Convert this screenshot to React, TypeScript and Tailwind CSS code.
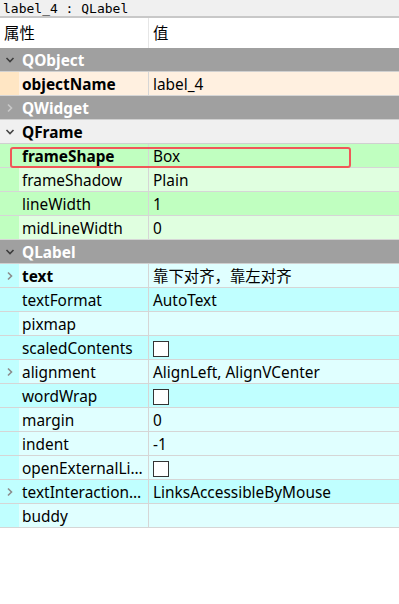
const font = { fontFamily: '"Noto Sans", "Noto Sans CJK SC", sans-serif' };

type Prop = {
  name: string;
  value?: string;
  bold?: boolean;
  arrow?: boolean;
  check?: boolean;
  dark: boolean;
  ring?: boolean;
};

type Group = {
  title: string;
  open: boolean;
  current?: boolean;
  strip: string;
  darkBg: string;
  lightBg: string;
  props: Prop[];
};

const groups: Group[] = [
  {
    title: "QObject",
    open: true,
    strip: "bg-[#ffe6c4]",
    darkBg: "bg-[#ffe6c4]",
    lightBg: "bg-[#fff0e0]",
    props: [{ name: "objectName", value: "label_4", bold: true, dark: false }],
  },
  { title: "QWidget", open: false, strip: "", darkBg: "", lightBg: "", props: [] },
  {
    title: "QFrame",
    open: true,
    current: true,
    strip: "bg-[#c0ffc0]",
    darkBg: "bg-[#c0ffc0]",
    lightBg: "bg-[#e0ffe0]",
    props: [
      { name: "frameShape", value: "Box", bold: true, dark: true, ring: true },
      { name: "frameShadow", value: "Plain", dark: false },
      { name: "lineWidth", value: "1", dark: true },
      { name: "midLineWidth", value: "0", dark: false },
    ],
  },
  {
    title: "QLabel",
    open: true,
    strip: "bg-[#c0ffff]",
    darkBg: "bg-[#c0ffff]",
    lightBg: "bg-[#e0ffff]",
    props: [
      { name: "text", value: "靠下对齐，靠左对齐", bold: true, arrow: true, dark: false },
      { name: "textFormat", value: "AutoText", dark: true },
      { name: "pixmap", value: "", dark: false },
      { name: "scaledContents", check: true, dark: true },
      { name: "alignment", value: "AlignLeft, AlignVCenter", arrow: true, dark: false },
      { name: "wordWrap", check: true, dark: true },
      { name: "margin", value: "0", dark: false },
      { name: "indent", value: "-1", dark: false },
      { name: "openExternalLi…", check: true, dark: false },
      { name: "textInteraction…", value: "LinksAccessibleByMouse", arrow: true, dark: true },
      { name: "buddy", value: "", dark: false },
    ],
  },
];

const Chevron = ({ open, className }: { open: boolean; className: string }) => (
  <svg width="10" height="10" viewBox="0 0 10 10" className={className}>
    {open ? (
      <path d="M1.5 3 L5 6.5 L8.5 3" fill="none" stroke="currentColor" strokeWidth="1.6" />
    ) : (
      <path d="M3 1.5 L6.5 5 L3 8.5" fill="none" stroke="currentColor" strokeWidth="1.6" />
    )}
  </svg>
);

const PropRow = ({ p, g }: { p: Prop; g: Group }) => (
  <div className={`relative flex h-6 border-b border-[#d6d6d6] ${p.dark ? g.darkBg : g.lightBg}`}>
    <div className={`flex w-[19px] items-center justify-center ${g.strip}`}>
      {p.arrow && <Chevron open={false} className="text-[#8c8c8c]" />}
    </div>
    <div
      className={`flex w-[129px] items-center whitespace-nowrap overflow-hidden pl-[3px] pt-[2px] text-black ${
        p.bold ? "font-bold" : ""
      }`}
    >
      {p.name}
    </div>
    <div className="w-px bg-[#d6d6d6]" />
    <div className="flex flex-1 items-center whitespace-nowrap pl-[4px] pt-[2px] text-black">
      {p.check ? (
        <span className="h-[16px] w-[16px] border border-[#333] bg-white" />
      ) : (
        p.value
      )}
    </div>
    {p.ring && (
      <div className="absolute left-[10px] top-[3px] h-[21px] w-[341px] rounded-[3px] border-2 border-[#f05858]" />
    )}
  </div>
);

export default function App() {
  return (
    <div className="h-[604px] w-[399px] bg-white text-[15.4px] leading-none" style={font}>
      <div
        className="flex h-[18px] items-center border-b-2 border-[#c8c8c8] bg-[#f0f0f0] pl-[3px] text-[13px] text-black"
        style={{ fontFamily: '"DejaVu Sans Mono", monospace' }}
      >
        label_4 : QLabel
      </div>
      <div className="flex h-[30px] bg-white">
        <div className="flex w-[148px] items-center pl-[4px] pt-[2px] text-black">属性</div>
        <div className="w-px bg-[#e6e6e6]" />
        <div className="flex flex-1 items-center pl-[4px] pt-[2px] text-black">值</div>
      </div>
      {groups.map((g) => (
        <div key={g.title}>
          <div
            className={`flex h-6 items-center border-b border-[#d0d0d0] font-bold ${
              g.current ? "bg-[#f0f0f0] text-black" : "bg-[#a0a0a0] text-white"
            }`}
          >
            <div className="flex w-[19px] items-center justify-center">
              <Chevron
                open={g.open}
                className={g.current ? "text-[#444]" : g.open ? "text-[#3c3c3c]" : "text-[#c8c8c8]"}
              />
            </div>
            <span className="pl-[3px] pt-[2px]">{g.title}</span>
          </div>
          {g.props.map((p) => (
            <PropRow key={p.name} p={p} g={g} />
          ))}
        </div>
      ))}
    </div>
  );
}
